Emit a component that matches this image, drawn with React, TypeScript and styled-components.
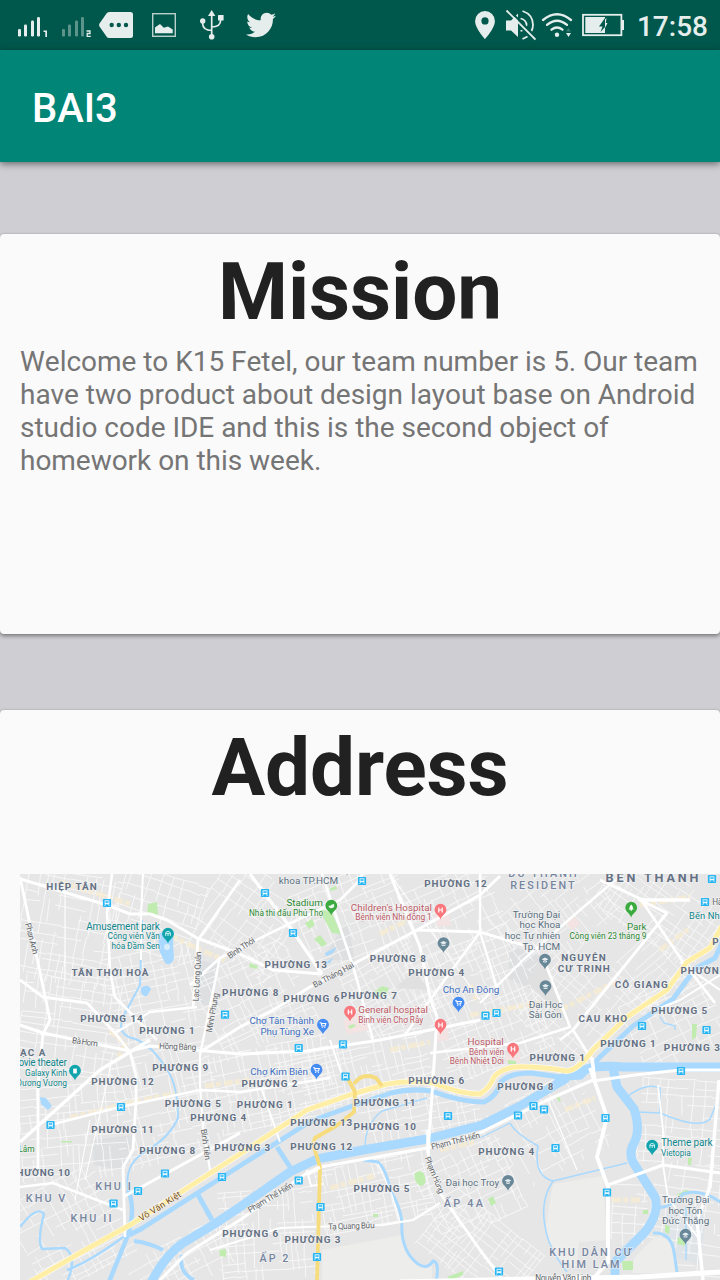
import React from "react";
import styled, { createGlobalStyle } from "styled-components";
import { FaTwitter } from "react-icons/fa";

const GlobalStyle = createGlobalStyle`
  html, body { margin: 0; padding: 0; }
  body { background: #cfced3; font-family: Roboto, "Liberation Sans", sans-serif; }
  * { box-sizing: border-box; }
`;

const Screen = styled.div`
  width: 720px;
  height: 1280px;
  display: flex;
  flex-direction: column;
  overflow: hidden;
  background: #cfced3;
`;

const StatusBar = styled.div`
  flex: none;
  height: 50px;
  display: flex;
  justify-content: space-between;
  padding: 0 12px 0 17px;
  background: #00574b;
  color: #e5eeec;
`;

const StatusGroup = styled.div`
  display: flex;
  align-items: center;
`;

const StatusIcon = styled.svg<{ $gap?: number }>`
  flex: none;
  display: block;
  margin-left: ${(p) => p.$gap ?? 0}px;
`;

const Bird = styled(FaTwitter)`
  display: block;
  width: 30px;
  height: 30px;
  margin-left: 22px;
`;

const Clock = styled.span`
  margin-left: 12px;
  font-size: 28px;
  font-weight: 500;
  line-height: 50px;
  padding-top: 3px;
`;

const AppBar = styled.header`
  flex: none;
  height: 112px;
  display: flex;
  align-items: center;
  padding: 6px 32px 0;
  background: #008577;
  box-shadow: 0 2px 7px rgba(0, 0, 0, 0.5);
  z-index: 1;
`;

const AppTitle = styled.h1`
  margin: 0;
  color: #fff;
  font-size: 40px;
  font-weight: 500;
  line-height: 48px;
`;

const Content = styled.main`
  flex: none;
  display: flex;
  flex-direction: column;
  gap: 76px;
  padding-top: 72px;
`;

const Card = styled.section<{ $height: number }>`
  height: ${(p) => p.$height}px;
  padding: 11px 20px 0;
  border-radius: 4px;
  background: #fafafa;
  box-shadow: 0 2px 4px rgba(0, 0, 0, 0.42), 0 0 1px rgba(0, 0, 0, 0.3);
`;

const CardTitle = styled.h2`
  margin: 0;
  text-align: center;
  color: #212121;
  font-size: 80px;
  font-weight: 700;
  line-height: 94px;
  letter-spacing: -0.1px;
`;

const Paragraph = styled.p`
  margin: 6px -10px 0 0;
  color: #757575;
  font-size: 28px;
  line-height: 33px;
  font-kerning: none;
  letter-spacing: -0.03px;
`;

const MapSvg = styled.svg`
  display: block;
  margin-top: 59px;
  background: #e6e6e6;
  font-family: Roboto, "Liberation Sans", sans-serif;
`;

const SIGNAL_BARS = [
  [0, 7.5],
  [6, 12],
  [13, 16],
  [19, 19.5],
];

const Signal = ({ n, dim, gap }: { n: string; dim?: boolean; gap?: number }) => (
  <StatusIcon width="32" height="50" viewBox="17 0 32 50" $gap={gap} fill="#e5eeec">
    <g opacity={dim ? 0.4 : 1}>
      {SIGNAL_BARS.map(([x, h]) => (
        <rect key={x} x={18 + x} y={36.5 - h} width="3" height={h} rx="1.2" />
      ))}
    </g>
    {n === "1" ? (
      <path d="M43.5 30.5H47V37H45.300V32H43.5z" />
    ) : (
      <path d="M42.500 31H46V33.500H43.200V36.300H46.800" fill="none" stroke="#e5eeec" strokeWidth="1.300" />
    )}
  </StatusIcon>
);

/* Deterministic generator so that side streets stay the same on every render. */
const rng = (seed: number) => () => {
  seed = (seed * 16807) % 2147483647;
  return seed / 2147483647;
};

/* Broken parallel lines in two directions, which read as a block of side streets. */
function streetGrid(x: number, y: number, w: number, h: number, deg: number, step: number, seed: number) {
  const r = rng(seed * 7919 + 13);
  const a = (deg * Math.PI) / 180;
  const cx = x + w / 2;
  const cy = y + h / 2;
  const rot = (px: number, py: number) => {
    const X = cx + px * Math.cos(a) - py * Math.sin(a);
    const Y = cy + px * Math.sin(a) + py * Math.cos(a);
    return `${X.toFixed(1)} ${Y.toFixed(1)}`;
  };
  let d = "";
  for (let v = -h / 2; v < h / 2; v += step * (0.6 + r() * 0.8)) {
    let u = -w / 2;
    while (u < w / 2) {
      const len = 8 + r() * 34;
      if (r() > 0.28) d += `M${rot(u, v)}L${rot(Math.min(u + len, w / 2), v + (r() - 0.5) * 3)}`;
      u += len;
    }
  }
  for (let u = -w / 2; u < w / 2; u += step * (0.6 + r() * 0.9)) {
    let v = -h / 2;
    while (v < h / 2) {
      const len = 7 + r() * 26;
      if (r() > 0.32) d += `M${rot(u, v)}L${rot(u + (r() - 0.5) * 3, Math.min(v + len, h / 2))}`;
      v += len;
    }
  }
  return d;
}

const DISTRICTS: number[][] = [
  [20, 874, 95, 110, 10, 8],
  [20, 980, 100, 100, 8, 8],
  [20, 1085, 105, 95, -5, 8],
  [20, 1180, 100, 100, -28, 9],
  [115, 874, 85, 80, 18, 9],
  [110, 950, 90, 90, -12, 9],
  [120, 1050, 100, 110, -14, 8],
  [200, 874, 100, 90, 35, 9],
  [205, 955, 100, 90, -25, 8],
  [215, 1045, 120, 80, -12, 7],
  [300, 1040, 130, 60, -13, 7],
  [300, 874, 110, 85, -22, 9],
  [350, 950, 80, 80, -28, 7],
  [410, 874, 90, 80, -25, 9],
  [425, 940, 110, 130, -22, 7],
  [500, 874, 110, 80, -38, 9],
  [530, 960, 100, 90, -48, 9],
  [600, 874, 120, 70, 35, 8],
  [620, 940, 70, 70, -42, 9],
  [630, 985, 90, 75, -25, 9],
  [360, 1090, 120, 50, -12, 8],
  [320, 1160, 110, 65, -12, 7],
  [220, 1190, 95, 90, -4, 8],
  [130, 1240, 100, 50, -28, 10],
  [425, 1150, 90, 80, -25, 8],
  [425, 1215, 110, 70, 38, 7],
  [490, 1090, 110, 85, -28, 9],
  [640, 1080, 85, 85, 4, 9],
  [612, 1185, 35, 60, 3, 9],
  [650, 1165, 80, 110, 8, 11],
];

const GRIDS = DISTRICTS.map(([x, y, w, h, a, s], i) => streetGrid(x, y, w, h, a, s, i + 1)).join("");

const OCHRE =
  "M60 882l70 22M170 935l30 15 25 10M70 1118l55-14 55-12M110 1030l15 15-8 15M205 1086l45-6M380 934l28-14M390 1050l40-8M470 1015l70-12M560 1010l55-28M660 950l30-22M330 1188l44-12M440 1150l34-8M565 1110l30-12M612 1200h28M470 985l8 18M640 905l50-8";

const AVENUES: [string, number][] = [
  ["M20 879L107 905L130 914L150 914L167 920L197 938L240 954L273 970L322 974", 3],
  ["M20 877L50 1020L43 1034L38 1085V1176", 2.8],
  ["M112 874L107 913L110 970L115 997L157 1040", 2.6],
  ["M143 874L141 915V960", 2],
  ["M240 880L198 940L193 1008", 2.8],
  ["M20 980L43 997L87 1003L115 1033L130 1052L136 1076V1100L133 1150L123 1167L125 1237", 2.8],
  ["M20 1025L43 1033L130 1051L150 1046L240 1054L307 1051L380 1040L480 1020", 3.2],
  ["M150 1040L130 1052L100 1070L20 1142", 3.4],
  ["M190 985L220 958L240 948L297 920L340 900L358 882L362 874", 2.6],
  ["M200 1052L240 1027L273 1010L310 987L357 962L417 930L480 895L500 876", 3],
  ["M322 874L350 957L357 980L373 1040", 2.6],
  ["M250 874L290 927L322 974", 3.2],
  ["M390 874L420 947L430 997L437 1017L433 1080L428 1153L440 1193L480 1250L503 1280", 3],
  ["M417 930L480 932L523 945", 2.8],
  ["M480 932L430 1000L405 1035M480 874V932L497 988", 2.4],
  ["M600 880L643 900H690M640 898L683 962L715 1003", 2.8],
  ["M480 1003L523 960L580 910L620 876", 2.4],
  ["M690 900H640L667 913L573 1030L592 1060", 2.8],
  ["M543 957L570 1027L520 1043L430 1053M573 1030L560 1040", 2.6],
  ["M590 1068L607 1117L597 1157L608 1187V1262L592 1280", 3.8],
  ["M593 1081L635 1075L680 1070H720", 3],
  ["M160 1280L187 1253L240 1220L307 1173L320 1167L427 1148L480 1133L547 1100L593 1080", 3],
  ["M608 1185L663 1165L720 1173", 3],
  ["M663 1165V1130L658 1085M663 1165L668 1198L700 1240", 1.8],
  ["M719 1080L710 1187L697 1220L703 1280", 3.4],
  ["M400 1282L530 1279L640 1277L720 1272", 5],
  ["M210 1250L280 1228L307 1227L383 1225L413 1220L440 1203", 2.2],
  ["M20 1187L53 1183L123 1210", 2.6],
  ["M50 1125L120 1107L200 1090L240 1092L330 1078", 2.6],
  ["M200 1050V1085L203 1127L210 1170", 2.2],
  ["M240 1133L167 1173L123 1197", 3],
  ["M220 957L200 1055", 2.4],
  ["M115 1033L150 1012L197 1007", 2.4],
  ["M262 1090L280 1142M330 1040L343 1078M307 1170l4 16 12-2", 2],
  ["M655 1010L680 1000L720 975M680 962L720 990", 2],
  ["M378 1164L392 1195L400 1222M548 1100L577 1170", 1.2],
  ["M390 874L480 1000M65 890V980M90 1120L75 1200M112 1060L85 1180", 1.1],
];

const HIGHWAY =
  "M30 1282L80 1253L130 1225L240 1154L307 1110L353 1094L387 1084Q410 1080 433 1083Q460 1094 480 1094Q490 1088 494 1077Q500 1069 515 1067Q535 1066 567 1071Q578 1070 593 1050L627 1017L667 990L687 962L710 948L722 926";

const CANAL =
  "M129 1235L141 1229L246 1162L311 1121L358 1104L391 1093Q411 1088 431 1091Q461 1102 484 1102Q497 1096 501 1082Q509 1073 531 1073L567 1078L581 1077L601 1056L633 1026L673 999L695 969L715 958L724 939";

const WATER: [string, number][] = [
  ["M150 1285Q164 1256 183 1243L213 1225L240 1207L290 1172L317 1159L363 1150L427 1139L482 1125L520 1106L567 1078", 9],
  ["M555 1081L587 1069Q600 1065 623 1067H722", 9],
  ["M613 1068L617 1087L634 1109Q641 1130 634 1143Q627 1155 636 1167L655 1197Q660 1213 645 1232L615 1262V1285", 9],
  ["M142 920L140 985L123 1017Q116 1035 135 1039Q152 1045 167 1070Q178 1085 178 1118Q170 1137 145 1152Q124 1164 128 1190Q135 1208 130 1230", 2],
  ["M128 1190Q136 1208 128 1235L109 1282", 4.5],
  ["M20 1227Q37 1205 44 1214Q37 1240 42 1249L65 1248Q78 1257 67 1282M67 1270Q90 1262 130 1232", 2.4],
  ["M197 1193L212 1220M277 1147L292 1170", 5],
  ["M182 1255Q178 1272 194 1280M134 1241Q150 1243 163 1250", 3.8],
  ["M365 1150Q364 1125 382 1111L427 1098", 1.4],
  ["M363 1160L378 1162Q387 1170 390 1190Q400 1205 402 1222Q400 1250 418 1264Q428 1270 433 1261Q440 1262 436 1282", 3],
  ["M510 1123Q515 1133 538 1146Q533 1176 553 1181L627 1163M553 1181Q540 1200 545 1226Q548 1248 567 1272", 1.6],
  ["M627 1097Q645 1082 660 1088V1113L637 1112M660 1113Q700 1130 710 1119L718 1100", 1.5],
  ["M657 1208Q674 1207 683 1194Q700 1188 722 1203M653 1233Q671 1232 674 1252L677 1272", 3],
  ["M686 1206V1260M660 1017L664 1023L675 1026L675 1030M480 1138L510 1123", 1.3],
];

const Transit = ({ x, y }: { x: number; y: number }) => (
  <g transform={`translate(${x} ${y})`}>
    <rect x="-4.1" y="-4.1" width="8.2" height="8.2" rx="0.8" fill="#27b5f3" />
    <path d="M-2.4 -2.7h4.8v4.2h-4.8z" fill="#e9f8ff" />
    <path d="M-1.6 -1.7h3.2v1.4h-3.2zM-1 1.6h2v1h-2z" fill="#27b5f3" />
    <path d="M-2.5 3l1-1.5M2.5 3l-1-1.5" stroke="#e9f8ff" strokeWidth="0.8" />
  </g>
);

const STOPS = [
  [107, 903], [225, 1014.7], [265, 893], [362, 881], [293, 933], [298.7, 1048], [343, 1044.3], [345.5, 1076.5],
  [712, 879], [705, 902], [642, 1026], [706.5, 1030], [485.5, 1015.7], [496.5, 1013], [681, 1071], [50.5, 1125],
  [121, 1107], [165, 1173.5], [138, 1191], [113.5, 1203.5], [222, 1177], [298.7, 1180.5], [320.5, 1207],
  [317, 1257], [448, 1116], [518, 1115.5], [533.5, 1106], [544, 1109.5], [605.5, 1118], [555.5, 1148],
  [607, 1192.5], [499, 1271.5],
];

const GLYPHS: Record<string, React.ReactNode> = {
  park: <path d="M-2.3 2V-1Q-2 -2.6 0 -2.6T2.3 -1V2M0 -1V2M-2.3 -0.6H2.3" stroke="#d9f5f5" strokeWidth="0.9" fill="none" />,
  cinema: <path d="M-1.8 -2.4H1.8V2.4H-1.8z" fill="#fff" />,
  stadium: <path d="M-2.8 -0.6Q-1 0.2 0.6 -1.6L2.8 -2V1Q0 3.2 -2.2 1.6z" fill="#eaf8ea" />,
  hospital: <path d="M-1.7 -2.5V2.5M1.7 -2.5V2.5M-1.7 0H1.7" stroke="#fff" strokeWidth="1.2" />,
  school: <path d="M-3.4 -0.7L0 -2.4L3.4 -0.7L0 1zM-2 0.8V2Q0 3.2 2 2V0.8L0 1.8z" fill="#e8eff3" />,
  cart: <path d="M-3 -2.3H-2L-1 1H2L2.8 -1.5H-1.6M-0.8 2.5h0.1M1.8 2.5h0.1" stroke="#fff" strokeWidth="1.1" strokeLinecap="round" fill="none" />,
  tree: <path d="M0 -3.5L2 -0.7H1.2L2.5 1.4H0.5V3H-0.5V1.4H-2.5L-1.2 -0.7H-2z" fill="#fff" />,
};

const PINS: [number, number, string, string][] = [
  [168, 934, "#12a4ad", "park"], [75, 1071, "#12a4ad", "cinema"], [331.3, 906, "#3bab3f", "stadium"],
  [440.5, 910, "#f8767c", "hospital"], [443.5, 943.5, "#688797", "school"], [458.5, 1003, "#448bf4", "cart"],
  [350, 1012, "#f8767c", "hospital"], [440.5, 1025, "#f8767c", "hospital"], [323, 1025, "#448bf4", "cart"],
  [316.5, 1070, "#448bf4", "cart"], [631.2, 908, "#3bab3f", "tree"], [545, 960, "#688797", "school"],
  [545.5, 986.5, "#688797", "school"], [513, 1049, "#f8767c", "hospital"], [652.2, 1146, "#12a4ad", "park"],
  [508, 1181.3, "#688797", "school"], [685.5, 1235, "#688797", "school"], [347, 866, "#688797", "school"],
];

type Kind = "ward" | "area" | "road" | "teal" | "green" | "red" | "blue" | "slate" | "big" | "hwy";
const KINDS: Record<Kind, { fill: string; weight: number; size: number }> = {
  ward: { fill: "#647184", weight: 700, size: 9.9 },
  area: { fill: "#7685a0", weight: 500, size: 10.8 },
  big: { fill: "#647184", weight: 700, size: 12.6 },
  road: { fill: "#606468", weight: 400, size: 8.3 },
  hwy: { fill: "#7a4f1c", weight: 400, size: 9 },
  teal: { fill: "#10868c", weight: 400, size: 10 },
  green: { fill: "#2d8a32", weight: 400, size: 9.9 },
  red: { fill: "#bd5a66", weight: 400, size: 9.9 },
  blue: { fill: "#3f6fc0", weight: 400, size: 9.9 },
  slate: { fill: "#5a7080", weight: 400, size: 9.9 },
};

/* text, left x, baseline y, width, kind, font size override */
const LABELS: [string, number, number, number, Kind, number?][] = [
  ["HIỆP TÂN", 46.2, 889.7, 50.5, "ward"],
  ["TÂN THỚI HOÀ", 71.5, 976.3, 77, "ward"],
  ["PHƯỜNG 14", 80.2, 1021.7, 62.5, "ward"],
  ["PHƯỜNG 1", 139.2, 1034, 55.5, "ward"],
  ["PHƯỜNG 9", 152.2, 1070.7, 56, "ward"],
  ["ẠC A", 20, 1055.7, 25.5, "ward"],
  ["PHƯỜNG 8", 222, 995.7, 56.5, "ward"],
  ["PHƯỜNG 13", 264.5, 968.3, 62.5, "ward"],
  ["PHƯỜNG 12", 424.2, 887, 62.5, "ward"],
  ["PHƯỜNG 8", 369.8, 961.7, 56, "ward"],
  ["PHƯỜNG 4", 408.2, 976, 56, "ward"],
  ["PHƯỜNG 6", 283.3, 1002.3, 56, "ward"],
  ["PHƯỜNG 7", 340.8, 999.3, 56, "ward"],
  ["PHƯỜNG 6", 408.2, 1084, 56, "ward"],
  ["NGUYỄN", 561.2, 961, 44.5, "ward"],
  ["CƯ TRINH", 557.8, 972, 52, "ward"],
  ["CÔ GIANG", 614.8, 988, 53, "ward"],
  ["CAU KHO", 578.5, 1021.7, 48.5, "ward"],
  ["PHƯỜNG 5", 651.2, 1014, 56, "ward"],
  ["PHƯỜNG 1", 600.2, 1047.3, 55.5, "ward"],
  ["PHƯỜNG 3", 663.8, 1051, 56, "ward"],
  ["PHƯỜNG 1", 529.5, 1061, 55.5, "ward"],
  ["PHƯỜNG 4", 680.5, 974.3, 56, "ward"],
  ["P", 712.3, 944.7, 7, "ward"],
  ["PHƯỜNG 12", 91.2, 1085, 62.5, "ward"],
  ["PHƯỜNG 5", 164.8, 1107, 56, "ward"],
  ["PHƯỜNG 4", 190.2, 1120.7, 56, "ward"],
  ["PHƯỜNG 11", 91.2, 1133.3, 62.5, "ward"],
  ["PHƯỜNG 8", 139.2, 1153.7, 56, "ward"],
  ["PHƯỜNG 3", 214.2, 1151.3, 56, "ward"],
  ["HƯỜNG 10", 16.5, 1175.7, 53.5, "ward"],
  ["PHƯỜNG 6", 222.2, 1236.7, 56, "ward"],
  ["PHƯỜNG 2", 241.5, 1087, 56, "ward"],
  ["PHƯỜNG 1", 236.7, 1108.3, 56, "ward"],
  ["PHƯỜNG 11", 353.5, 1105.7, 62, "ward"],
  ["PHƯỜNG 13", 290.2, 1126, 62, "ward"],
  ["PHƯỜNG 10", 353.5, 1129.7, 62.5, "ward"],
  ["PHƯỜNG 12", 290.2, 1150.3, 62, "ward"],
  ["PHƯỜNG 5", 353.5, 1192.3, 56, "ward"],
  ["PHƯỜNG 3", 284.5, 1243, 56, "ward"],
  ["PHƯỜNG 8", 497.3, 1089.7, 56, "ward"],
  ["PHƯỜNG 4", 478.2, 1154.7, 56, "ward"],
  ["BẾN THÀNH", 605.5, 882.3, 93, "big"],
  ["DU THÀNH", 508.2, 877, 68.5, "area"],
  ["RESIDENT", 510.2, 888.9, 64.5, "area"],
  ["KHU I", 95.2, 1190, 35.5, "area"],
  ["KHU V", 25.8, 1201.7, 39.5, "area"],
  ["KHU II", 70.5, 1221.7, 41, "area"],
  ["ẤP 4A", 443.8, 1207, 39, "area"],
  ["ẤP 2", 259.5, 1262, 29, "area"],
  ["KHU DÂN CƯ", 549.2, 1256, 82, "area"],
  ["HIM LAM", 561.5, 1267.9, 58, "area"],
  ["Amusement park", 86.3, 930, 73.5, "teal"],
  ["Công viên Văn", 107.5, 939, 52.5, "teal", 8.4],
  ["hóa Đầm Sen", 111.5, 949, 48.5, "teal", 8.4],
  ["ovie theater", 18.5, 1066, 48.4, "teal"],
  ["Galaxy Kinh", 25.1, 1075.7, 42, "teal", 8.4],
  ["Dương Vương", 16.5, 1085.7, 50.5, "teal", 8.4],
  ["Bến Nhà", 689, 918.7, 36, "teal", 9.400],
  ["Theme park", 661, 1146.3, 51.5, "teal"],
  ["Vietopia", 661.1, 1155.7, 29.6, "teal", 8.4],
  ["Stadium", 286.5, 906.3, 36.3, "green"],
  ["Nhà thi đấu Phú Thọ", 249, 915.7, 74.2, "green", 8.3],
  ["Park", 627, 930, 19.5, "green"],
  ["Công viên 23 tháng 9", 569.5, 939.3, 77, "green", 8.4],
  ["Lâm", 18.5, 1152.3, 16, "green", 8.4],
  ["Children's Hospital", 350.8, 910.7, 81.2, "red"],
  ["Bệnh viện Nhi đồng 1", 355.3, 920.3, 76.5, "red", 8.4],
  ["General hospital", 358.3, 1013, 69.5, "red"],
  ["Bịnh viện Chợ Rẫy", 358.3, 1022.7, 65, "red", 8.4],
  ["Hospital", 467.6, 1044.7, 36, "red"],
  ["Bệnh viện", 469, 1054.7, 35.2, "red", 8.4],
  ["Bệnh Nhiệt Đới", 449.7, 1064, 54.2, "red", 8.4],
  ["Chợ An Đông", 442.7, 992.5, 56.6, "blue"],
  ["Chợ Tân Thành", 249.4, 1024, 64.6, "blue"],
  ["Phụ Tùng Xe", 260.4, 1034.7, 53.6, "blue"],
  ["Chợ Kim Biên", 250.3, 1074.7, 57.6, "blue"],
  ["khoa TP.HCM", 278.7, 884, 59.4, "slate"],
  ["Trường Đại", 512.7, 917.7, 47.500, "slate"],
  ["học Khoa", 519.4, 928.3, 41, "slate"],
  ["học Tự nhiên", 504.7, 939, 55.6, "slate"],
  ["Tp. HCM", 522.4, 950, 37.8, "slate"],
  ["Đại Học", 528.7, 1007.7, 33.6, "slate"],
  ["Sài Gòn", 528.7, 1018.3, 33, "slate"],
  ["Đại học Troy", 445.5, 1186.3, 53.8, "slate"],
  ["Trường Đại", 662, 1203.3, 47.3, "slate"],
  ["học Tôn", 668.4, 1214, 33.9, "slate"],
  ["Đức Thắng", 662, 1224.3, 47.3, "slate"],
  ["Hà", 712.3, 904.5, 10, "road"],
  ["Nguyễn Văn Linh", 535.3, 1280.7, 56, "road"],
];

/* text, centre x, centre y, angle, width, kind */
const ROAD_NAMES: [string, number, number, number, number, Kind][] = [
  ["Phan Anh", 31.7, 938.5, 76, 32, "road"],
  ["Lạc Long Quân", 197, 976.5, -87, 50, "road"],
  ["Minh Phụng", 212.5, 1012.5, -80, 40, "road"],
  ["Bình Thới", 241, 948, -34, 31, "road"],
  ["Ba Tháng Hai", 333.3, 975, -28, 45, "road"],
  ["Bà Hom", 85, 1042, 8, 26, "road"],
  ["Hồng Bàng", 177.7, 1046.7, 2, 37, "road"],
  ["Bình Tiên", 205.7, 1144.5, 82, 31, "road"],
  ["Võ Văn Kiệt", 160, 1206.5, -32, 48, "hwy"],
  ["Phạm Thế Hiển", 270.3, 1197.5, -31, 51, "road"],
  ["Phạm Thế Hiển", 455.5, 1141, -14, 50, "road"],
  ["Phạm Hùng", 434.5, 1175, 68, 39, "road"],
  ["Tạ Quang Bửu", 351.5, 1226, -2, 46.5, "road"],
];

const HALO = { stroke: "#f4f4f4", strokeOpacity: 0.7, strokeWidth: 1.6, paintOrder: "stroke" } as const;

const CityMap = () => (
  <MapSvg width="700" height="406" viewBox="20 874 700 406">
    <g fill="#dddfe1">
      <path d="M92 1140l40-5-2 25-8 10-28-5zM510 945l32 12 8 40-42-18zM322 960l25-40 8 40zM200 960l20 5-10 40-10 0z" />
      <path d="M668 1205l38 10-6 50-40-12z" fill="#dfe4e9" />
    </g>
    <path d={GRIDS} stroke="#f8f8f8" strokeWidth="0.95" fill="none" />
    <g fill="#ededeb">
      <path d="M553 1184l50-8 4 64-28 2-2 26-22-12-10-26z" />
      <path d="M322 1250l80-15q0 20 18 31l12-1 0 15H322z" />
      <path d="M655 1237l16 2 4 34h-42q-5-10 6-20z" />
    </g>
    <path d="M541 957l27 68-22-24-20-20zM395 988l20-18 14 20z" fill="#e0e0e0" />
    <path d={OCHRE} stroke="#f8ecd0" strokeWidth="5" strokeOpacity="0.75" fill="none" strokeDasharray="9 2 5 3" />
    <g fill="#f3e3e3">
      <path d="M343 1020l18-8 8 18-22 4zM434 915l14-4 3 14-13 2zM436 1030l12-2 1 12-13 2zM506 1055l14-2v10l-13 1zM566 922l10-5 4 8-9 5z" />
    </g>
    <g fill="#c0ecb0">
      <path d="M148 904l9-2 1 13-11 1zM318 908l14 5 9 21-9-1zM305 923l7-4 3 6-6 4zM314 939l6-4 7 9-5 3zM374 992l8-6 7 2-3 7-8 2z" />
      <path d="M250 963l8 3-1 3-8-2zM415 1173q8-5 10 4t-5 9q-7-5-5-13zM219 1250l7-1v8l-6-1zM622 1261h11v9h-10zM488 1199l5-3 3 7-5 3zM692 1024h5l-1 13-4 3zM61 1141h11v1.5H61zM373 1214h5v3h-5zM447 1277l16-6v4l-12 5zM678 1237l7 2v7l-8-2zM665 1224l5 3-1 7-4-2zM348 1026l6-2 2 2-6 3zM330 888l6-2 1 3-7 2z" />
      <path d="M508 1060l8 1v3h-8zM676 1195l10-5 5 2-11 5zM643 1210h5v4h-5zM688 1158l4-1-1 8h-3zM556 1096l2-1 3 6-2 1z" />
    </g>
    <g fill="#a9d9fe">
      <path d="M158 934q10-5 16-2l-1 12 1 14q-3 9-9 5l-6-13zM141 988q7-5 10 1l-4 7q-7 1-6-8zM325 953l12-6-4 6-7 3zM326 962l7-4-3 5-5 1zM40 1097l6 1 6 8-4 4-7-6z" />
      <circle cx="167" cy="947" r="3" fill="#d9edf9" />
    </g>
    <g fill="none" stroke="#a9d9fe" strokeLinejoin="round">
      {WATER.map(([d, w]) => (
        <path key={d} d={d} strokeWidth={w} />
      ))}
      <path d={CANAL} strokeWidth="5" />
    </g>
    <g fill="none" stroke="#fff" strokeLinejoin="round">
      {AVENUES.map(([d, w]) => (
        <path key={d} d={d} strokeWidth={w} />
      ))}
      <path d={HIGHWAY} strokeWidth="6" />
    </g>
    <path d={HIGHWAY} fill="none" stroke="#feeea6" strokeWidth="5" />
    <g fill="none" stroke="#f7dc7d" strokeWidth="3.8" strokeLinejoin="round">
      <path d="M347 1077L355 1092L354 1112L336 1126L315 1138L313 1144L320 1167L317 1282" />
      <path d="M354 1084Q362 1072 376 1078L382 1086" />
    </g>
    <path d="M592 1058L595 1082M428 1130V1153M320 1167L308 1174" stroke="#fff" strokeWidth="3.5" />

    {LABELS.map(([t, x, y, w, kind, size]) => {
      const k = KINDS[kind];
      return (
        <text
          key={`${t}${x}${y}`}
          x={x}
          y={y}
          textLength={w}
          fontSize={size ?? k.size}
          fontWeight={k.weight}
          fill={k.fill}
          {...HALO}
        >
          {t}
        </text>
      );
    })}
    {ROAD_NAMES.map(([t, x, y, a, w, kind]) => (
      <text
        key={`${t}${x}`}
        transform={`translate(${x} ${y}) rotate(${a})`}
        x={-w / 2}
        y="2.8"
        textLength={w}
        fontSize={KINDS[kind].size}
        fill={KINDS[kind].fill}
        {...HALO}
      >
        {t}
      </text>
    ))}
    {STOPS.map(([x, y]) => (
      <Transit key={`${x}-${y}`} x={x} y={y} />
    ))}
    {PINS.map(([x, y, fill, glyph]) => (
      <g key={`${x}-${y}`} transform={`translate(${x} ${y})`}>
        <path d="M0 9.5C-0.7 5.8 -5.9 4 -5.9 -0.3A5.9 5.9 0 0 1 5.9 -0.3C5.9 4 0.7 5.8 0 9.5z" fill={fill} />
        {GLYPHS[glyph]}
      </g>
    ))}
  </MapSvg>
);

export default function App() {
  return (
    <>
      <GlobalStyle />
      <Screen>
        <StatusBar>
          <StatusGroup>
            <Signal n="1" />
            <Signal n="2" dim gap={12} />
            <StatusIcon width="34" height="50" viewBox="99 0 34 50" $gap={6}>
              <path d="M109 12H130.5Q133 12 133 14.5V35.5Q133 38 130.5 38H109Q107.5 38 106.5 36.5L99.5 26.5Q98.7 25 99.5 23.5L106.5 13.5Q107.5 12 109 12z" fill="#e5eeec" />
              <g fill="#00574b">
                <circle cx="111.7" cy="25" r="2.2" />
                <circle cx="118.8" cy="25" r="2.2" />
                <circle cx="126" cy="25" r="2.2" />
              </g>
            </StatusIcon>
            <StatusIcon width="24" height="50" viewBox="152 0 24 50" $gap={19}>
              <rect x="152.7" y="13.7" width="22.6" height="22.6" fill="none" stroke="#b9d0cc" strokeWidth="1.4" />
              <path d="M155 33.3V27.5L157 26L160 24L163.8 27.7L168 26.5L172.7 29.5V33.3z" fill="#e5eeec" />
            </StatusIcon>
            <StatusIcon width="24" height="50" viewBox="200 0 24 50" $gap={24} fill="#e5eeec">
              <path d="M211.7 14V36M202.7 22V24Q203 30.5 211.7 30.5M220.7 18V20Q220.5 27 211.7 27" fill="none" stroke="#e5eeec" strokeWidth="1.7" />
              <path d="M211.7 10L215.3 16H208z" />
              <circle cx="211.7" cy="36.7" r="2.8" />
              <circle cx="202.7" cy="21" r="2.7" />
              <rect x="218" y="15" width="5.6" height="5.4" rx="0.5" />
            </StatusIcon>
            <Bird />
          </StatusGroup>
          <StatusGroup>
            <StatusIcon width="20" height="50" viewBox="475 0 20 50">
              <path d="M485 11A9.9 9.9 0 0 0 475.1 20.9C475.1 28.3 485 39 485 39S494.9 28.3 494.9 20.9A9.9 9.9 0 0 0 485 11zM485 24.5A3.6 3.6 0 1 1 485 17.3A3.6 3.6 0 0 1 485 24.5z" fill="#e5eeec" />
            </StatusIcon>
            <StatusIcon width="31" height="50" viewBox="505 0 31 50" $gap={10}>
              <path d="M506 20.5H511L518 13.5V37L511 30.5H506z" fill="#e5eeec" />
              <g fill="none" stroke="#e5eeec" strokeWidth="1.8">
                <path d="M522.5 11Q533 14.5 533 25Q533 28.5 531 32M527.5 36.5L522.5 39M520.5 18.5Q526.5 20 526.5 25L525.8 27M520.5 31L522.5 30.5" />
              </g>
              <path d="M508 9L537 38" stroke="#00574b" strokeWidth="2" />
              <path d="M506.5 10.5L535.5 39.5" stroke="#e5eeec" strokeWidth="1.9" />
            </StatusIcon>
            <StatusIcon width="32" height="50" viewBox="541 0 32 50" $gap={5}>
              <g fill="none" stroke="#e5eeec" strokeWidth="2.3" strokeLinecap="round">
                <path d="M543 20Q557 8.5 571 20M547 24.9Q557 16.5 567 24.9M551.5 29.7Q557 25.3 562.5 29.7" />
              </g>
              <circle cx="557" cy="34.8" r="2.2" fill="#e5eeec" />
              <path d="M566 33H571L568.5 37z" fill="#e5eeec" />
              <path d="M566 31.5H571L568.5 28z" fill="#37796f" />
            </StatusIcon>
            <StatusIcon width="43" height="50" viewBox="582 0 43 50" $gap={9}>
              <rect x="583" y="14.8" width="38.4" height="20.4" fill="none" stroke="#e5eeec" strokeWidth="1.8" />
              <rect x="621.5" y="20" width="2.5" height="10" fill="#e5eeec" />
              <rect x="585.3" y="17" width="19.7" height="16" fill="#e5eeec" />
              <path d="M605 18L599 26.5H602.5L600.5 32L605 27z" fill="#00574b" />
              <path d="M605 19.5L606.5 18L605.8 23H607.5L605 28z" fill="#e5eeec" />
            </StatusIcon>
            <Clock>17:58</Clock>
          </StatusGroup>
        </StatusBar>
        <AppBar>
          <AppTitle>BAI3</AppTitle>
        </AppBar>
        <Content>
          <Card $height={400}>
            <CardTitle>Mission</CardTitle>
            <Paragraph>
              Welcome to K15 Fetel, our team number is 5. Our team have two product about design layout base on Android
              studio code IDE and this is the second object of homework on this week.
            </Paragraph>
          </Card>
          <Card $height={590}>
            <CardTitle>Address</CardTitle>
            <CityMap />
          </Card>
        </Content>
      </Screen>
    </>
  );
}
